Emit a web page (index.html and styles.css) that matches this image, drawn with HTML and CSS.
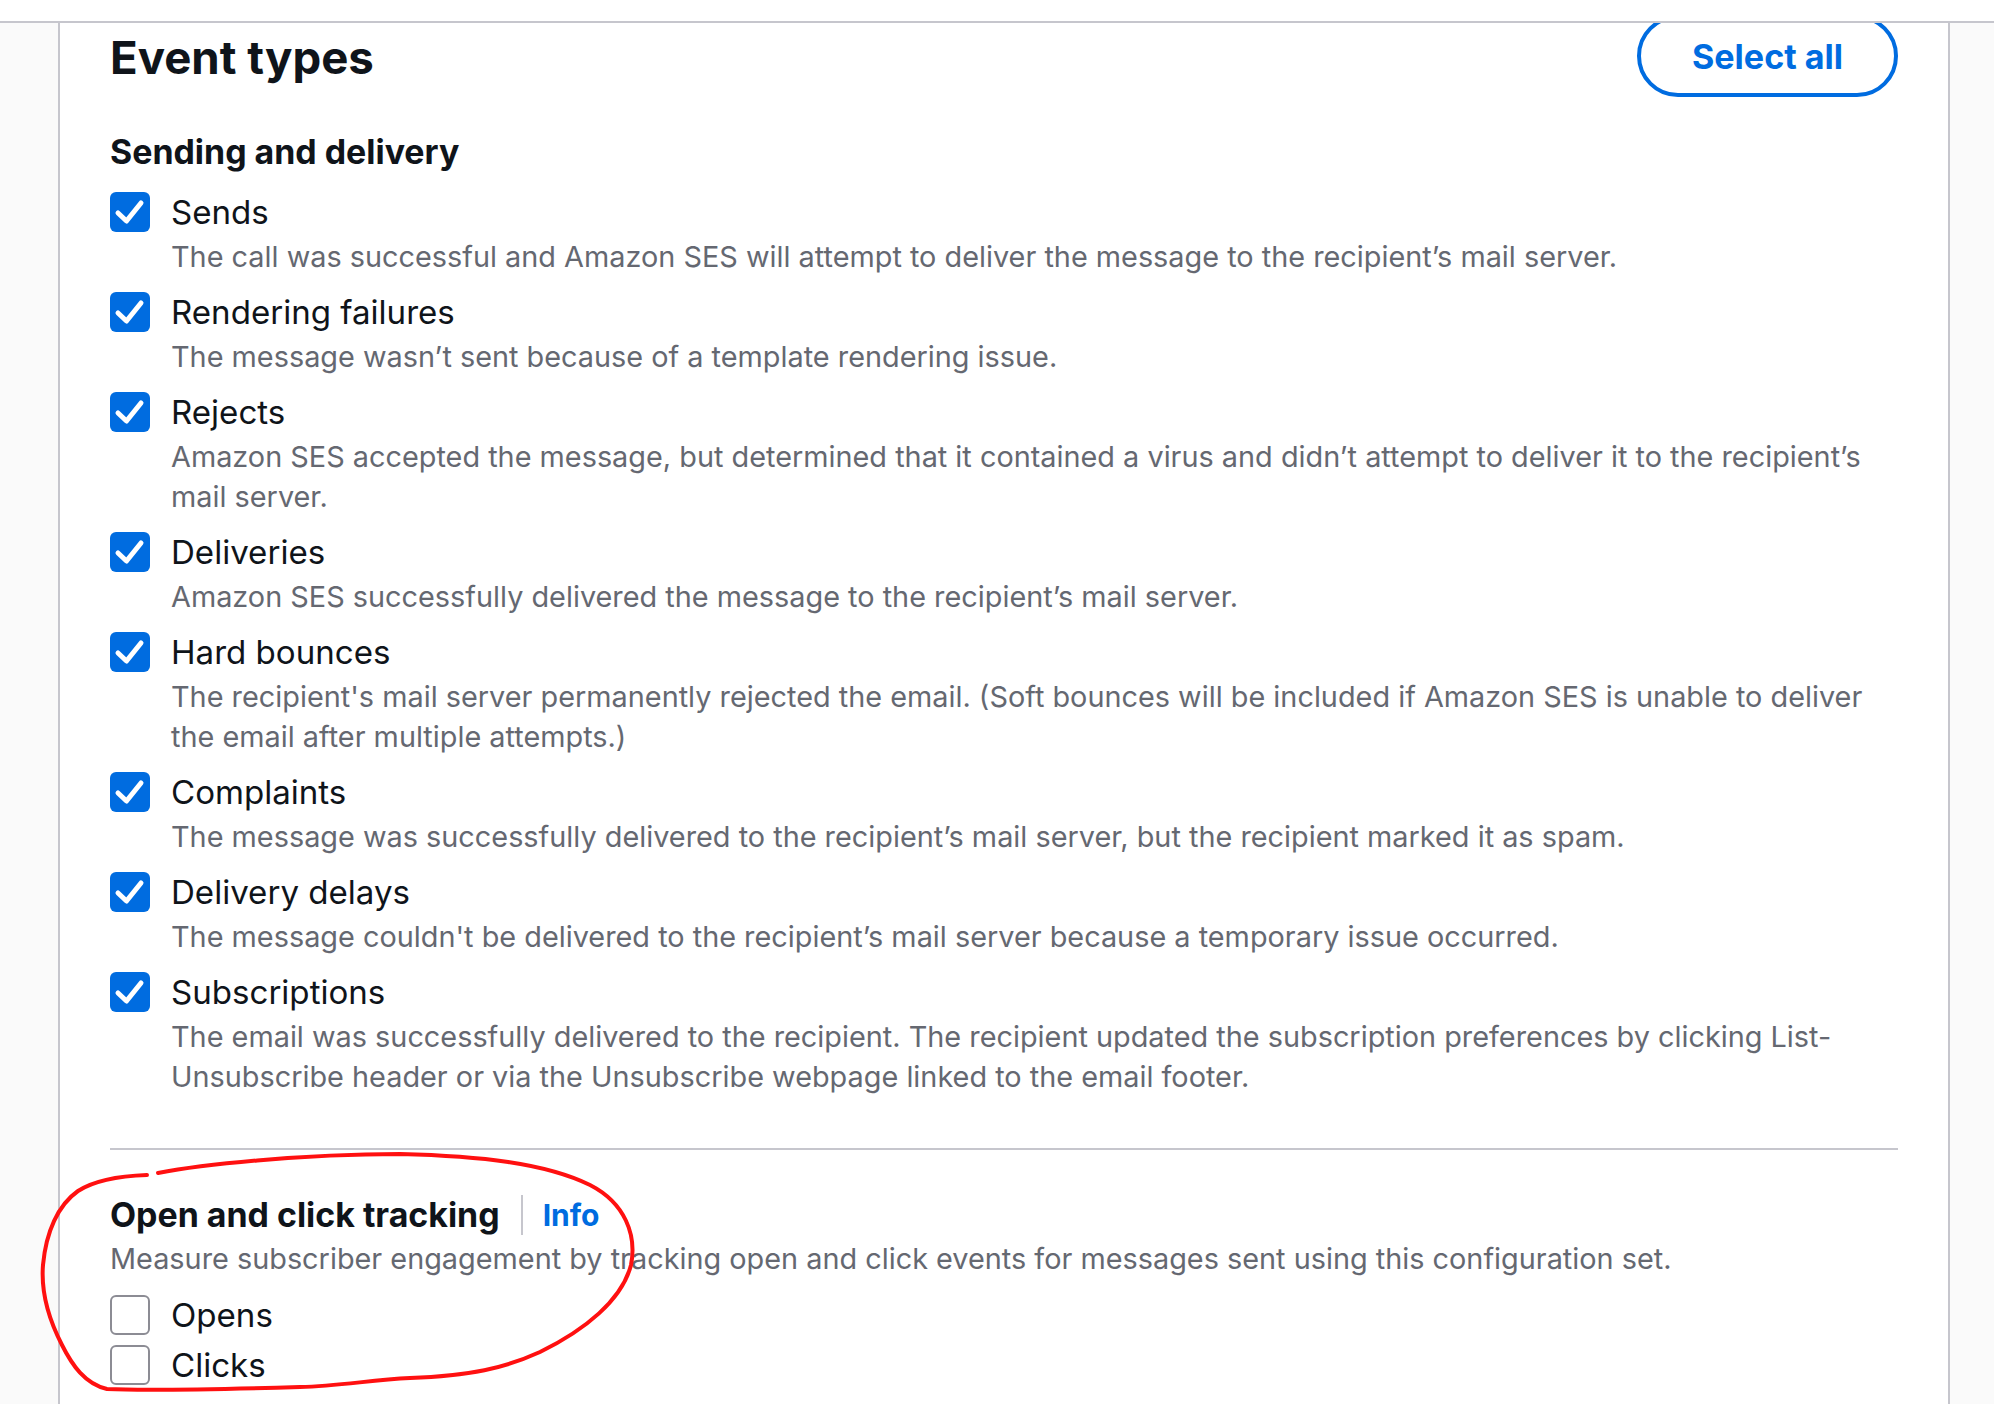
FILE: index.html
```html
<!DOCTYPE html>
<html lang="en">
<head>
<meta charset="utf-8">
<title>Event types</title>
<link rel="stylesheet" href="styles.css">
</head>
<body>
<header class="topbar"></header>
<main class="layout">
  <section class="panel">
    <div class="panel-head">
      <h2 class="title">Event types</h2>
      <button class="btn" type="button">Select all</button>
    </div>

    <div class="group group-first">
      <h3 class="subtitle">Sending and delivery</h3>
      <ul class="checks">
        <li class="check">
          <span class="box on"><svg viewBox="0 0 40 40"><polyline points="8,21 16.5,29 31,11"/></svg></span>
          <div class="text">
            <div class="label">Sends</div>
            <div class="desc">The call was successful and Amazon SES will attempt to deliver the message to the recipient’s mail server.</div>
          </div>
        </li>
        <li class="check">
          <span class="box on"><svg viewBox="0 0 40 40"><polyline points="8,21 16.5,29 31,11"/></svg></span>
          <div class="text">
            <div class="label">Rendering failures</div>
            <div class="desc">The message wasn’t sent because of a template rendering issue.</div>
          </div>
        </li>
        <li class="check">
          <span class="box on"><svg viewBox="0 0 40 40"><polyline points="8,21 16.5,29 31,11"/></svg></span>
          <div class="text">
            <div class="label">Rejects</div>
            <div class="desc">Amazon SES accepted the message, but determined that it contained a virus and didn’t attempt to deliver it to the recipient’s mail server.</div>
          </div>
        </li>
        <li class="check">
          <span class="box on"><svg viewBox="0 0 40 40"><polyline points="8,21 16.5,29 31,11"/></svg></span>
          <div class="text">
            <div class="label">Deliveries</div>
            <div class="desc">Amazon SES successfully delivered the message to the recipient’s mail server.</div>
          </div>
        </li>
        <li class="check">
          <span class="box on"><svg viewBox="0 0 40 40"><polyline points="8,21 16.5,29 31,11"/></svg></span>
          <div class="text">
            <div class="label">Hard bounces</div>
            <div class="desc">The recipient's mail server permanently rejected the email. (Soft bounces will be included if Amazon SES is unable to deliver the email after multiple attempts.)</div>
          </div>
        </li>
        <li class="check">
          <span class="box on"><svg viewBox="0 0 40 40"><polyline points="8,21 16.5,29 31,11"/></svg></span>
          <div class="text">
            <div class="label">Complaints</div>
            <div class="desc">The message was successfully delivered to the recipient’s mail server, but the recipient marked it as spam.</div>
          </div>
        </li>
        <li class="check">
          <span class="box on"><svg viewBox="0 0 40 40"><polyline points="8,21 16.5,29 31,11"/></svg></span>
          <div class="text">
            <div class="label">Delivery delays</div>
            <div class="desc">The message couldn't be delivered to the recipient’s mail server because a temporary issue occurred.</div>
          </div>
        </li>
        <li class="check">
          <span class="box on"><svg viewBox="0 0 40 40"><polyline points="8,21 16.5,29 31,11"/></svg></span>
          <div class="text">
            <div class="label">Subscriptions</div>
            <div class="desc">The email was successfully delivered to the recipient. The recipient updated the subscription preferences by clicking List-Unsubscribe header or via the Unsubscribe webpage linked to the email footer.</div>
          </div>
        </li>
      </ul>
    </div>

    <div class="group group-tracking">
      <div class="subhead">
        <h3 class="subtitle">Open and click tracking</h3>
        <span class="sep"></span>
        <a class="info" href="#">Info</a>
      </div>
      <p class="desc intro">Measure subscriber engagement by tracking open and click events for messages sent using this configuration set.</p>
      <ul class="checks compact">
        <li class="check">
          <span class="box"></span>
          <div class="text"><div class="label">Opens</div></div>
        </li>
        <li class="check">
          <span class="box"></span>
          <div class="text"><div class="label">Clicks</div></div>
        </li>
      </ul>
    </div>
  </section>
</main>
<svg class="annot" viewBox="0 0 1994 1404" width="1994" height="1404">
  <path d="M158,1173 C200,1165 300,1154 400,1154 C480,1156 545,1163 590,1185 C625,1203 637,1235 631,1265 C622,1300 585,1330 540,1352 C505,1368 470,1376 410,1378 C370,1380 340,1386 300,1387 C230,1389 150,1391 107,1389 C85,1384 72,1365 62,1345 C48,1318 41,1290 43,1265 C46,1232 58,1205 78,1191 C95,1180 120,1176 147,1175"/>
</svg>
</body>
</html>
```
FILE: styles.css
```css
* { box-sizing: border-box; }

html, body {
  margin: 0;
  padding: 0;
}

body {
  font-family: Inter, "Noto Sans", sans-serif;
  color: #0f141a;
  background: #fafafa;
  overflow: hidden;
}

.topbar {
  position: fixed;
  top: 0;
  left: 0;
  right: 0;
  height: 23px;
  background: #ffffff;
  border-bottom: 2px solid #c6c6cd;
  z-index: 2;
}

.layout {
  display: flex;
  min-height: 100vh;
  padding-left: 58px;
}

.panel {
  width: 1892px;
  min-height: 1404px;
  background: #ffffff;
  border-left: 2px solid #c6c6cd;
  border-right: 2px solid #c6c6cd;
  padding: 15px 50px 0 50px;
}

.panel-head {
  display: flex;
  justify-content: space-between;
  align-items: flex-start;
  height: 82px;
}

.title {
  margin: 0;
  padding-top: 3px;
  font-size: 45.6px;
  line-height: 79px;
  font-weight: 700;
}

.btn {
  height: 82px;
  padding: 0 51px;
  border: 4px solid #006ce0;
  border-radius: 999px;
  background: #ffffff;
  color: #006ce0;
  font-family: inherit;
  font-size: 34.1px;
  font-weight: 700;
  line-height: 76px;
}

.subtitle {
  margin: 0;
  font-size: 33.9px;
  line-height: 40px;
  font-weight: 700;
}

.group-first {
  padding-top: 35px;
  padding-bottom: 41px;
  border-bottom: 2px solid #c6c6cd;
}

.group-tracking {
  padding-top: 45px;
}

.checks {
  list-style: none;
  margin: 15px 0 0 0;
  padding: 0;
}

.check {
  display: flex;
  align-items: flex-start;
  margin-bottom: 10px;
}

.compact {
  margin-top: 11px;
}

.compact .check {
  margin-bottom: 0;
}

.box {
  flex: 0 0 40px;
  width: 40px;
  height: 40px;
  margin-top: 5px;
  margin-right: 21px;
  border: 2px solid #8c8c94;
  border-radius: 6px;
  background: #ffffff;
}

.box.on {
  border: none;
  background: #006ce0;
}

.box svg {
  display: block;
  width: 40px;
  height: 40px;
}

.box polyline {
  fill: none;
  stroke: #ffffff;
  stroke-width: 5;
  stroke-linecap: round;
  stroke-linejoin: round;
}

.text {
  flex: 1 1 auto;
  min-width: 0;
}

.label {
  font-size: 33.1px;
  line-height: 50px;
  color: #0f141a;
}

.desc {
  margin: 0;
  font-size: 28.85px;
  line-height: 40px;
  color: #656871;
}

.subhead {
  display: flex;
  align-items: center;
  height: 40px;
}

.sep {
  width: 2px;
  height: 40px;
  margin: 0 20px 0 21px;
  background: #c6c6cd;
}

.info {
  font-size: 30px;
  line-height: 40px;
  font-weight: 700;
  color: #006ce0;
  text-decoration: none;
}

.intro {
  margin-top: 4px;
}

.annot {
  position: absolute;
  top: 0;
  left: 0;
  pointer-events: none;
  z-index: 3;
}

.annot path {
  fill: none;
  stroke: #ff1010;
  stroke-width: 4;
  stroke-linecap: round;
  stroke-linejoin: round;
}
```
